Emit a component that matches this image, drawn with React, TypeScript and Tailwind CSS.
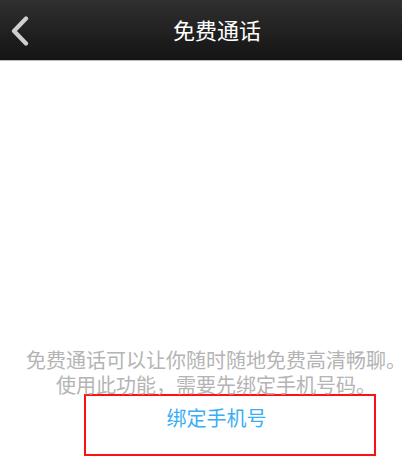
export default function App() {
    return (
        <div className="w-[402px] h-[475px] bg-white overflow-hidden" style={{ fontFamily: '"Noto Sans CJK SC", "Noto Sans", sans-serif' }}>
            {/* Header */}
            <div className="relative h-[61px] bg-gradient-to-b from-[#303030] to-[#141414] border-b border-[#bdbdbd] flex items-center">
                <svg className="absolute left-[10px] top-[16px]" width="20" height="30" viewBox="0 0 20 30">
                    <polyline points="16,2.5 4,15 16,27.5" fill="none" stroke="#cfcfcf" strokeWidth="4.2" strokeLinecap="round" strokeLinejoin="round" />
                </svg>
                <div className="flex-1 pl-[32px] text-center text-white text-[22px] leading-none -mt-[2px]">免费通话</div>
            </div>

            {/* Body */}
            <div className="mt-[286px] ml-[26px] w-[380px] text-center text-[20px] leading-[25px] text-[#b4b4b4] whitespace-nowrap">
                <p>免费通话可以让你随时随地免费高清畅聊。</p>
                <p>使用此功能，需要先绑定手机号码。</p>
            </div>

            <div className="-mt-[3px] ml-[84px] w-[292px] h-[62px] border-2 border-[#ff1010] pt-[10px] pr-[27px] text-center text-[20px] leading-[24px] text-[#3aaef2]">
                绑定手机号
            </div>
        </div>
    );
}
